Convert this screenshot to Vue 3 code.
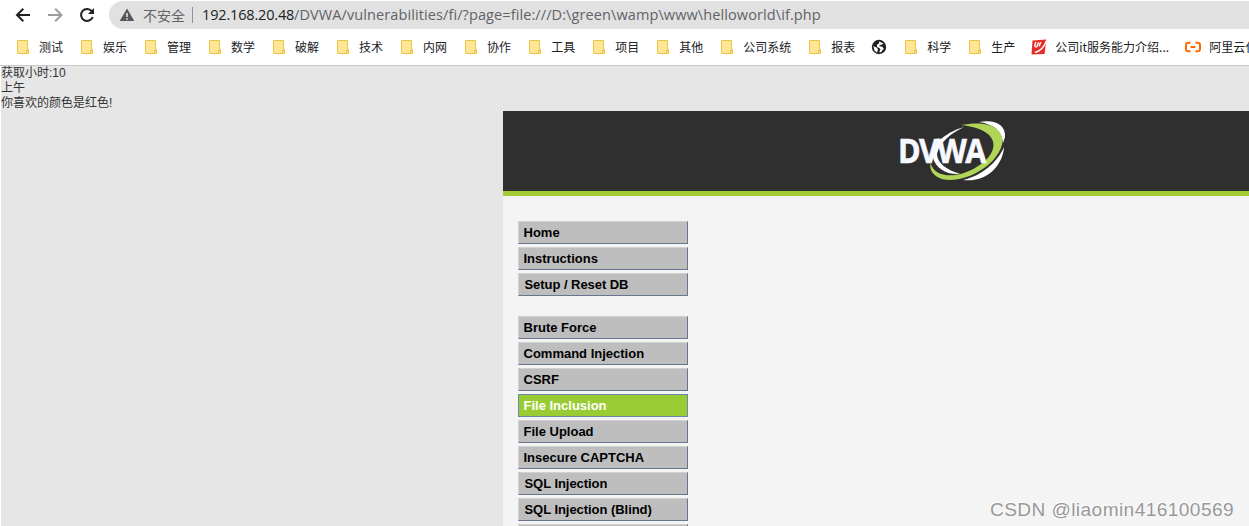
<script setup>
const folders = (names) => names.map((label) => ({ icon: 'folder', label }))
const bookmarks = [
  ...folders(['测试', '娱乐', '管理', '数学', '破解', '技术', '内网', '协作', '工具', '项目', '其他', '公司系统', '报表']),
  { icon: 'globe', label: '' },
  ...folders(['科学', '生产']),
  { icon: 'red', label: '公司it服务能力介绍...', wide: true },
  { icon: 'cloud', label: '阿里云代码' },
]
const groups = [
  ['Home', 'Instructions', 'Setup / Reset DB'],
  ['Brute Force', 'Command Injection', 'CSRF', 'File Inclusion', 'File Upload', 'Insecure CAPTCHA', 'SQL Injection', 'SQL Injection (Blind)', ''],
]
</script>

<template>
  <div class="window">
    <div class="toolbar">
      <svg class="nav-icons" width="109" height="30" viewBox="0 0 109 30" fill="none" stroke-width="2">
        <path d="M30 15H17.5M23.3 8.7L17 15L23.3 21.3" stroke="#202124" />
        <path d="M48 15H61M55.2 8.7L61.5 15L55.2 21.3" stroke="#9b9c9e" />
        <path d="M91.8 11.2A6 6 0 1 0 92.7 17" stroke="#202124" />
        <path d="M94 8V14H88Z" fill="#202124" />
      </svg>
      <div class="address">
        <svg class="warn" width="16" height="14" viewBox="0 0 16 14">
          <path d="M8 0.5L15.3 13H0.7Z" fill="#54585c" />
          <path d="M7.2 5H8.8V9H7.2ZM7.2 10.2H8.8V11.7H7.2Z" fill="#e1e1e1" />
        </svg>
        <span class="unsafe">不安全</span>
        <span class="divider"></span>
        <span class="url"><span class="host">192.168.20.48</span><span class="path">/DVWA/vulnerabilities/fi/?page=file:///D:\green\wamp\www\helloworld\if.php</span></span>
      </div>
    </div>
    <div class="bookmarks">
      <div v-for="(b, i) in bookmarks" :key="i" class="bookmark">
        <svg v-if="b.icon === 'folder'" width="16" height="16" viewBox="0 0 16 16">
          <path d="M2.5 1.5H12.5V10.5H13.5V14.5H2.5Z" fill="#ffe694" stroke="#e8c44b" />
          <path d="M11.5 14V11.5H13" fill="none" stroke="#e8c44b" />
        </svg>
        <svg v-else-if="b.icon === 'globe'" width="16" height="16" viewBox="0 0 16 16">
          <circle cx="8" cy="8" r="7.2" fill="#202124" />
          <path d="M8.2 2.6L12.4 4.6L10.6 5.8H8.6V7.4H10.8L12.8 9.6L10 13.2H8.2L9.4 10.6L8.4 9L6 8V5.8L8 4.6Z" fill="#fff" />
          <path d="M2.3 7.2L5.6 8.6L7 10.4L6 13.4L3.6 11.8Z" fill="#fff" />
        </svg>
        <svg v-else-if="b.icon === 'red'" width="16" height="16" viewBox="0 0 16 16">
          <path d="M1.5 1.5L15.5 0.5L13.5 15L0.5 15.5Z" fill="#e52d27" />
          <path d="M4.8 3L3.8 6.5Q4 8.5 6 7.5L7.5 3.5M9.6 3L8.2 7.3M15.5 1.5Q12 11.5 4 13.5" fill="none" stroke="#fff" stroke-width="1.4" />
        </svg>
        <svg v-else width="16" height="16" viewBox="0 0 16 16" fill="none" stroke="#ff6a00" stroke-width="2">
          <path d="M5.5 3.7H3.2Q1 3.7 1 6V10Q1 12.3 3.2 12.3H5.5M10.5 3.7H12.8Q15 3.7 15 6V10Q15 12.3 12.8 12.3H10.5M5.5 8H10.5" />
        </svg>
        <span v-if="b.label" :class="{ wide: b.wide }">{{ b.label }}</span>
      </div>
    </div>
    <div class="page">
      <div class="output">获取小时:10<br>上午<br>你喜欢的颜色是红色!</div>
      <div class="container">
        <header>
          <svg width="108" height="64" viewBox="0 0 108 64">
            <path d="M80 3C95 0 107 5 106 18L104 24C103 14 98 6 80 3Z" fill="#fff" />
            <path d="M105 28C104 46 88 64 64 61C82 57 98 44 105 28Z" fill="#fff" />
            <path d="M62 6C88 1 104 8 103.500 23C100 46 67 64 45 60.500C35 58 30 52 31.500 44C36 60 59 59 76 49C99 37 107 11 62 6Z" fill="#b0d557" />
            <path d="M65 8C44 14 31 28 34 39C37 49 47 56 61 55C48 51 38 44 38 35C40 24 52 14 65 8Z" fill="#fff" />
            <text transform="translate(-1 43.500) scale(.9 1)" class="logo-text">DVWA</text>
          </svg>
        </header>
        <nav>
          <ul v-for="(g, gi) in groups" :key="gi">
            <li v-for="item in g" :key="item" :class="{ selected: item === 'File Inclusion', shifted: item.startsWith('S') }">{{ item }}</li>
          </ul>
        </nav>
      </div>
      <div class="watermark">CSDN @liaomin416100569</div>
    </div>
  </div>
</template>

<style>
body { margin: 0; overflow: hidden; }
</style>
<style scoped>
.window { width: 1249px; height: 526px; overflow: hidden; display: flex; flex-direction: column; background: #fff; font-family: "Liberation Sans", "Noto Sans CJK SC", sans-serif; }
.toolbar { height: 29px; flex: none; display: flex; }
.nav-icons { flex: none; }
.address { box-sizing: border-box; flex: 1; height: 28px; margin-top: 1px; padding-left: 10px; border-radius: 14px 0 0 14px; background: #e1e1e1; display: flex; align-items: center; white-space: nowrap; color: #5f6368; }
.warn { flex: none; }
.unsafe { width: 42px; margin-left: 8px; font: 14px/28px "Noto Sans CJK SC", sans-serif; }
.divider { width: 1px; height: 16px; margin: 0 9px 0 7px; background: #919496; }
.url { font: 14.5px/28px "Open Sans", sans-serif; display: flex; }
.host { width: 92px; color: #202124; letter-spacing: -0.16px; }
.path { letter-spacing: 0.1px; }
.bookmarks { box-sizing: border-box; height: 37px; flex: none; padding-left: 15px; border-bottom: 1px solid #c8c8c8; display: flex; align-items: center; gap: 16px; overflow: hidden; }
.bookmark { display: flex; align-items: center; gap: 8px; flex: none; font: 12px/18px "Noto Sans CJK SC", sans-serif; color: #202124; white-space: nowrap; }
.bookmark svg { flex: none; }
.wide { width: 114px; }
.page { position: relative; box-sizing: border-box; flex: 1; border-left: 1px solid #fff; background: #e6e6e6; overflow: hidden; }
.output { height: 45px; font-size: 12px; line-height: 15px; color: #333; }
.container { margin-left: 502px; height: 415px; background: #f4f4f4; }
header { box-sizing: border-box; height: 85px; padding: 8px 0 0 396px; background: #2f2f2f; border-bottom: 5px solid #a1cc33; }
header svg { display: block; }
.logo-text { font: bold 34px "Open Sans", sans-serif; letter-spacing: -1.8px; fill: #f8f8ff; stroke: #f8f8ff; stroke-width: 0.6px; }
nav { padding: 25px 0 0 15px; }
ul { list-style: none; margin: 0 0 20px; padding: 0; display: flex; flex-direction: column; gap: 3px; }
li { box-sizing: border-box; width: 170px; height: 23px; padding-left: 4.5px; border: 1px solid; border-color: #d1d1d1 #68758f #68758f #d1d1d1; background: #bebebe; color: #000; font-size: 13px; font-weight: bold; line-height: 21px; white-space: nowrap; }
li.shifted { padding-left: 5.5px; letter-spacing: -0.05px; }
li.selected { background: #9c3; border-color: #6b87ad; color: #fff; }
.watermark { position: absolute; right: 15px; bottom: 4px; color: #989898; font-size: 19px; line-height: 24px; letter-spacing: 0.47px; white-space: nowrap; text-shadow: -1px -1px 0 #fff; }
</style>
